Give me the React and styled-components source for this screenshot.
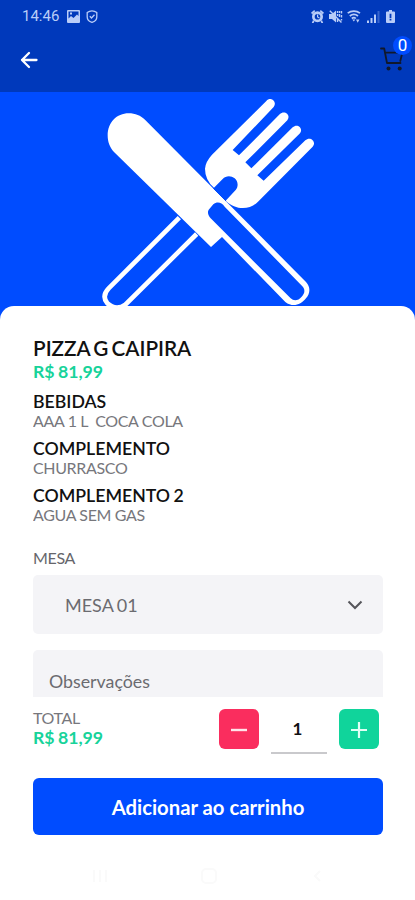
import styled, { createGlobalStyle } from 'styled-components';

const extras = [
  { title: 'BEBIDAS', value: 'AAA 1 L  COCA COLA' },
  { title: 'COMPLEMENTO', value: 'CHURRASCO' },
  { title: 'COMPLEMENTO 2', value: 'AGUA SEM GAS' },
];

function StatusBar() {
  return (
    <Status>
      <Clock>14:46</Clock>
      <svg width="13" height="13" viewBox="0 0 13 13">
        <path
          fillRule="evenodd"
          d="M1 0h11a1 1 0 0 1 1 1v11a1 1 0 0 1-1 1H1a1 1 0 0 1-1-1V1a1 1 0 0 1 1-1zM1.5 1.5v7L4 6l2.5 2L10 4.500l1.500 1.500V1.500zM3 2.500h2v2H3z"
        />
      </svg>
      <svg className="shield" width="12" height="13" viewBox="0 0 12 13">
        <path
          d="M6 .8C8 .8 9.500 1.500 10.800 2.500v4.500C10.800 9.500 9 11.500 6 12.300 3 11.500 1.200 9.500 1.200 7V2.500C2.500 1.500 4 .8 6 .8zM3.800 6.300l1.700 1.700L8.500 4.800"
          fill="none"
          stroke="currentColor"
          strokeWidth="1.300"
        />
      </svg>
      <Spacer />
      <svg width="13" height="13" viewBox="0 0 13 13">
        <path d="M0 2.800L3.200 0l1 1.200L1.200 4.200zM13 2.800L9.800 0 8.800 1.200l3 3z" />
        <path d="M2 10l1.500 1.500L2.500 13H.8zM11 10l-1.500 1.500 1 1.500h1.700z" />
        <path fillRule="evenodd" d="M6.500 1.200a5.500 5.500 0 1 1 0 11 5.500 5.500 0 0 1 0-11zm0 2.700a2.800 2.800 0 1 0 0 5.600 2.800 2.800 0 0 0 0-5.600z" />
        <path d="M6 4.500h1.200v2.200l1.500.9-.6.900L6 7.300z" />
      </svg>
      <svg className="mute" width="14" height="13" viewBox="0 0 14 13">
        <path d="M0 4h3l4-3.500v12L3 9H0z" />
        <path
          d="M.8.800l11.700 11.700M8.500 1v2M8.500 4v2M8.500 9v3M10.500 1v2M10.500 4v3M12.500 1v2.500M12.500 5v2.500M12.500 9v1.500"
          fill="none"
          stroke="currentColor"
          strokeWidth="1.400"
        />
      </svg>
      <svg className="wifi" width="15" height="13" viewBox="0 0 15 13">
        <path
          d="M.7 3.200C4.300.3 9.500.3 13 3.200M2.800 6C5.300 3.900 8.500 3.900 11 6M4.800 8.500C6.200 7.300 7.500 7.300 8.800 8.500"
          fill="none"
          stroke="currentColor"
          strokeWidth="1.700"
        />
        <path d="M5.300 9.500h3L6.800 11.500zM9 9.500h3.500L10.700 12.800z" />
      </svg>
      <svg className="signal" width="13" height="13" viewBox="0 0 13 13">
        <path d="M0 10.500h2V13H0zM3.500 8h2v5h-2zM7 4.500h2V13H7z" />
        <path d="M10.500 1h2v12h-2z" opacity=".3" />
      </svg>
      <svg className="battery" width="9" height="13" viewBox="0 0 9 13">
        <path
          fillRule="evenodd"
          d="M3 0h3v1.500h2a1 1 0 0 1 1 1V12a1 1 0 0 1-1 1H1a1 1 0 0 1-1-1V2.500a1 1 0 0 1 1-1h2zM3.600 3.800v4.400h1.800V3.800zm0 5.200v1.500h1.800V9z"
        />
      </svg>
    </Status>
  );
}

function CartIcon() {
  return (
    <svg width="24" height="25" viewBox="0 0 24 25">
      <path
        d="M1 1.500h3.200L7 16h13.500M4.900 5.700H22.300L20.300 14"
        fill="none"
        stroke="currentColor"
        strokeWidth="1.800"
        strokeLinecap="round"
        strokeLinejoin="round"
      />
      <circle cx="8.500" cy="21.500" r="2" fill="currentColor" />
      <circle cx="19.700" cy="21.500" r="2" fill="currentColor" />
    </svg>
  );
}

function Cutlery() {
  return (
    <svg width="240" height="216" viewBox="0 6 720 648" fill="#fff">
      <path
        d="M268 383L56 595Q34 618 52 640Q78 664 106 644L320 432"
        fill="none"
        stroke="#fff"
        strokeWidth="14"
      />
      <path d="M372 293Q345 270 345 236Q346 216 366 194L529 33C542 18 563 36 551 51L428 180L447 196L569 73C583 59 604 75 592 91L466 217L484 235L608 112C622 99 641 115 630 130L502 256L521 272L646 151C660 137 681 155 668 170L504 335C480 360 438 362 407 332L437 300C447 288 443 272 434 265C423 256 407 257 398 267Z" />
      <path
        fillRule="evenodd"
        d="M165 89L648 576C663 592 660 612 648 625C632 645 608 653 586 636L396 441L363 471L72 186C59 172 53 156 53 136C53 98 80 70 116 70C136 70 152 77 165 89ZM404 350C394 335 380 334 370 343L358 357C350 366 355 377 362 385L602 625C612 634 625 632 635 620C646 609 645 597 637 589Z"
      />
      <path d="M370 295L408 333" stroke="#004cff" strokeWidth="3" />
    </svg>
  );
}

function App() {
  return (
    <>
      <GlobalStyle />
      <Screen>
        <Header>
          <StatusBar />
          <Nav>
            <svg width="18" height="18" viewBox="0 0 18 18">
              <path
                d="M16.500 9H2M9 2L2 9l7 7"
                fill="none"
                stroke="#fff"
                strokeWidth="2.300"
                strokeLinecap="round"
                strokeLinejoin="round"
              />
            </svg>
            <Cart>
              <CartIcon />
              <Badge>0</Badge>
            </Cart>
          </Nav>
        </Header>
        <Hero>
          <Cutlery />
        </Hero>
        <Card>
          <Content>
            <Title>PIZZA G CAIPIRA</Title>
            <Price>R$ 81,99</Price>
            {extras.map((item) => (
              <Extra key={item.title}>
                <ExtraTitle>{item.title}</ExtraTitle>
                <Muted>{item.value}</Muted>
              </Extra>
            ))}
            <Label>MESA</Label>
            <Select>
              MESA 01
              <svg width="16" height="10" viewBox="0 0 16 10">
                <path d="M1.500 1.500L8 8l6.500-6.500" fill="none" stroke="#55555b" strokeWidth="2" />
              </svg>
            </Select>
            <Notes>Observações</Notes>
          </Content>
          <Footer>
            <Total>
              <Muted>TOTAL</Muted>
              <Price>R$ 81,99</Price>
            </Total>
            <Counter>
              <CounterButton $color="#fa2d5e">
                <svg width="18" height="18" viewBox="0 0 18 18">
                  <path d="M1 10h16" stroke="#ffe3ea" strokeWidth="2.400" />
                </svg>
              </CounterButton>
              <Quantity>1</Quantity>
              <CounterButton $color="#10d49b">
                <svg width="18" height="18" viewBox="0 0 18 18">
                  <path d="M1 10h16M9 2v16" stroke="#e2fff5" strokeWidth="2.200" />
                </svg>
              </CounterButton>
            </Counter>
          </Footer>
          <AddButton>Adicionar ao carrinho</AddButton>
          <SystemNav>
            <svg width="18" height="18" viewBox="0 0 18 18">
              <path d="M3 3v12M9 3v12M15 3v12" />
            </svg>
            <svg width="18" height="18" viewBox="0 0 18 18">
              <rect x="2" y="2" width="14" height="14" rx="4" />
            </svg>
            <svg width="18" height="18" viewBox="0 0 18 18">
              <path d="M12 4L7 9l5 5" />
            </svg>
          </SystemNav>
        </Card>
      </Screen>
    </>
  );
}

const GlobalStyle = createGlobalStyle`
  * {
    box-sizing: border-box;
  }
  body {
    margin: 0;
    font-family: Lato, sans-serif;
  }
  svg {
    display: block;
    flex-shrink: 0;
  }
  button {
    border: 0;
    padding: 0;
    font-family: inherit;
    cursor: pointer;
  }
`;

const Screen = styled.div`
  display: flex;
  flex-direction: column;
  width: 415px;
  height: 900px;
  overflow: hidden;
  background-color: #004cff;
`;

const Header = styled.header`
  height: 92px;
  background-color: #0039bb;
`;

const Status = styled.div`
  display: flex;
  align-items: center;
  height: 32px;
  padding: 0 20px 0 22px;
  color: #b9cdf8;

  svg {
    fill: currentColor;
  }
  .shield {
    margin-left: 6px;
  }
  .mute {
    margin-left: 5px;
  }
  .wifi {
    margin-left: 4px;
  }
  .signal {
    margin-left: 5px;
  }
  .battery {
    margin-left: 6px;
  }
`;

const Clock = styled.span`
  width: 45px;
  font-family: Roboto, sans-serif;
  font-size: 15px;
`;

const Spacer = styled.div`
  flex: 1;
`;

const Nav = styled.div`
  display: flex;
  align-items: center;
  justify-content: space-between;
  height: 55px;
  padding: 0 11px 0 20px;
`;

const Cart = styled.div`
  position: relative;
  color: #10182c;
`;

const Badge = styled.span`
  position: absolute;
  top: -11px;
  right: -8px;
  width: 19px;
  height: 19px;
  border-radius: 50%;
  background-color: #004cff;
  color: #fff;
  font-family: Roboto, sans-serif;
  font-size: 17px;
  line-height: 19px;
  text-align: center;
`;

const Hero = styled.div`
  display: flex;
  height: 214px;
  padding-left: 90px;
`;

const Card = styled.main`
  position: relative;
  display: flex;
  flex-direction: column;
  flex: 1;
  padding: 0 32px 0 33px;
  border-radius: 14px 14px 0 0;
  background-color: #fff;
`;

const Content = styled.section`
  height: 391px;
  padding-top: 29px;
  overflow: hidden;
`;

const Title = styled.h1`
  margin: 0;
  font-size: 20.7px;
  font-weight: 600;
  line-height: 26px;
  word-spacing: -2px;
  color: #111;
`;

const Price = styled.div`
  font-size: 17.7px;
  font-weight: 700;
  line-height: 22px;
  word-spacing: -1px;
  color: #17d39a;
`;

const Extra = styled.div`
  margin-top: 10px;
`;

const ExtraTitle = styled.h2`
  margin: 0;
  font-size: 17.7px;
  font-weight: 600;
  line-height: 18px;
  word-spacing: -1px;
  color: #111;
`;

const Muted = styled.div`
  font-size: 16px;
  line-height: 19px;
  letter-spacing: -0.35px;
  white-space: pre;
  color: #77777c;
`;

const Label = styled.div`
  margin-top: 24px;
  font-size: 16px;
  line-height: 19px;
  letter-spacing: -0.35px;
  color: #66666b;
`;

const Select = styled.div`
  display: flex;
  align-items: center;
  justify-content: space-between;
  height: 59px;
  margin-top: 8px;
  padding: 1px 20px 0 32px;
  border-radius: 5px;
  background-color: #f4f4f7;
  font-size: 18px;
  word-spacing: -1px;
  color: #6b6b70;
`;

const Notes = styled.div`
  height: 80px;
  margin-top: 16px;
  padding: 20px 16px;
  border-radius: 5px;
  background-color: #f4f4f7;
  font-size: 17.8px;
  line-height: 22px;
  color: #6b6b70;
`;

const Footer = styled.section`
  display: flex;
  justify-content: space-between;
  height: 81px;
  padding: 12px 4px 0 0;
`;

const Total = styled.div`
  margin-top: -1px;
`;

const Counter = styled.div`
  display: flex;
  gap: 12px;
`;

const CounterButton = styled.button`
  display: flex;
  align-items: center;
  justify-content: center;
  width: 40px;
  height: 40px;
  border-radius: 6px;
  background-color: ${(props) => props.$color};
`;

const Quantity = styled.div`
  width: 56px;
  height: 45px;
  padding-right: 3px;
  border-bottom: 2px solid #c9c9cc;
  font-size: 17px;
  font-weight: 700;
  line-height: 40px;
  text-align: center;
  color: #111;
`;

const AddButton = styled.button`
  height: 57px;
  flex-shrink: 0;
  border-radius: 6px;
  background-color: #004cff;
  color: #fff;
  font-size: 20.3px;
  font-weight: 700;
`;

const SystemNav = styled.div`
  display: flex;
  justify-content: space-between;
  padding: 32px 57px 0 58px;

  svg {
    fill: none;
    stroke: #fafafa;
    stroke-width: 2;
  }
`;

export default App;
